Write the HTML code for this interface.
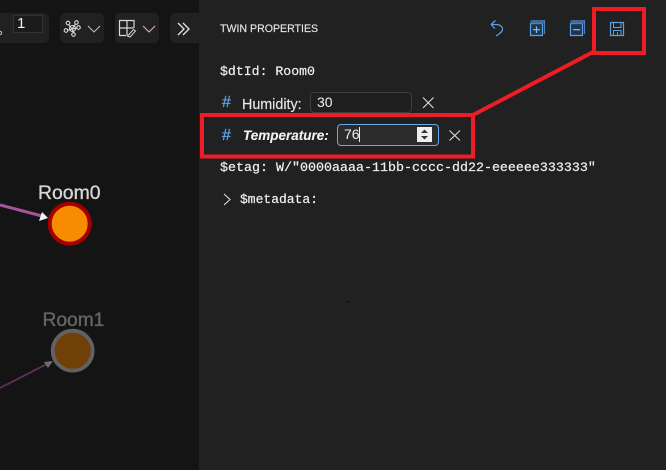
<!DOCTYPE html>
<html>
<head>
<meta charset="utf-8">
<style>
html,body{margin:0;padding:0;width:666px;height:470px;overflow:hidden;background:#141414;}
body{position:relative;font-family:"Liberation Sans",sans-serif;color:#eee;}
.a{position:absolute;white-space:pre;}
.m{font-family:"Liberation Mono",monospace;font-size:13.2px;color:#f0f0f0;line-height:16px;-webkit-text-stroke:.2px #f0f0f0;}
.s{font-size:14.3px;color:#e8e8e8;line-height:18px;-webkit-text-stroke:.15px #e8e8e8;}
.h{font-size:16px;line-height:18px;color:#5aa0e6;-webkit-text-stroke:.35px #5aa0e6;}
</style>
</head>
<body>
<!-- toolbar groups -->
<div class="a" style="left:-10px;top:13px;width:59px;height:30px;background:#212121;border-radius:5px"></div>
<div class="a" style="left:60px;top:13px;width:44px;height:30px;background:#212121;border-radius:5px"></div>
<div class="a" style="left:115px;top:13px;width:44px;height:30px;background:#212121;border-radius:5px"></div>
<div class="a" style="left:170px;top:13px;width:40px;height:30px;background:#212121;border-radius:5px"></div>
<div class="a" style="left:13px;top:15px;width:28px;height:16px;border:1px solid #333;background:#1b1b1b"></div>
<div class="a" style="left:17px;top:15px;font-size:15px;line-height:18px;color:#eee">1</div>
<svg class="a" style="left:0;top:0" width="200" height="50" fill="none">
<circle cx="0" cy="33" r="1.6" stroke="#ccc"/>
<g stroke="#d8d8d8" stroke-width="1.1">
<path d="M72 29L68.500 24.500M72 29L75.500 24M72 29L67.500 30.500M72 29L74 33M72 29L77 28"/>
<circle cx="72.500" cy="28.500" r="3"/><circle cx="68" cy="23" r="1.800"/><circle cx="76.500" cy="22.500" r="1.800"/><circle cx="66" cy="30.500" r="1.800"/><circle cx="73.500" cy="34.500" r="1.800"/><circle cx="78.500" cy="27.500" r="1.800"/>
</g>
<path d="M88 26L94 32L100 26" stroke="#a9bfd0" stroke-width="1.1"/>
<path d="M126 35.500H119.500V20.500H134V28M119.500 28H133.500M127 20.500V35.500" stroke="#d8d8d8" stroke-width="1.200"/>
<path d="M127.500 36L133.500 29.500L135.500 31L130 37Z" stroke="#d8d8d8" fill="#212121"/>
<path d="M143 26L149 32L155 26" stroke="#d0b9a9" stroke-width="1.1"/>
<path d="M178 23L184 29L178 35M183 23L189 29L183 35" stroke="#e6e6e6" stroke-width="1.3"/>
</svg>

<!-- Panel -->
<div class="a" style="left:199px;top:0;width:467px;height:470px;background:#212121"></div>

<!-- graph -->
<svg class="a" style="left:0;top:170px" width="120" height="240" fill="none">
<path d="M0 35L42 46" stroke="#a4559c" stroke-width="3"/>
<path d="M48 48L39 51L42 42Z" fill="#f2f2f2"/>
<circle cx="69.700" cy="53.700" r="20" fill="#f88c00" stroke="#a50000" stroke-width="4"/>
<path d="M0 218L46 194.500" stroke="#5f315d" stroke-width="1.800"/>
<path d="M53 191L44 192L48 198Z" fill="#6e6e6e"/>
<circle cx="72.700" cy="180.700" r="20" fill="#704009" stroke="#626262" stroke-width="3.800"/>
</svg>
<div class="a" style="left:38px;top:182px;font-size:19.400px;line-height:22px;color:#d6d6d6;-webkit-text-stroke:.35px #d6d6d6">Room0</div>
<div class="a" style="left:42.500px;top:310px;font-size:19.200px;line-height:22px;color:#666;-webkit-text-stroke:.35px #666">Room1</div>
<div class="a" style="left:347px;top:301px;width:2px;height:1px;background:#000"></div>

<!-- header -->
<div class="a" style="left:220px;top:21px;font-size:10.600px;line-height:16px;color:#e4e4e4;-webkit-text-stroke:.15px #e4e4e4">TWIN PROPERTIES</div>
<svg class="a" style="left:470px;top:0" width="196" height="70" fill="none">
<path d="M21 24.500L25.500 20.500M21 24.500L25 28.500M21.500 24.500H26C30 24.500 32.500 26.500 32.500 29.500C32.500 32 29.500 33.500 26 36" stroke="#5aa0e6" stroke-width="1.200"/>
<path d="M60.500 23.500H72.500V35.500H60.500Z" stroke="#5aa0e6" stroke-width="1.200" fill="#20354b"/>
<path d="M60.500 20.800H74.500V34" stroke="#4a7fb8" stroke-width="1.200"/>
<path d="M60.500 21H74V23.500H60.500Z" fill="#3f6a9a"/>
<path d="M66.500 26.500V33M63 29.700H70" stroke="#8cc0f2" stroke-width="1.200"/>
<path d="M100.500 23.500H112.500V35.500H100.500Z" stroke="#5aa0e6" stroke-width="1.200" fill="#20354b"/>
<path d="M100.500 20.800H114.500V34" stroke="#4a7fb8" stroke-width="1.200"/>
<path d="M100.500 21H114V23.500H100.500Z" fill="#3f6a9a"/>
<path d="M103 29.700H110" stroke="#8cc0f2" stroke-width="1.200"/>
<path d="M140.500 22.500H153.500V35.500H140.500Z" stroke="#5aa0e6" stroke-width="1.200"/>
<path d="M143.500 22.500V27.500H151V22.500M143.500 35.500V30.500H151V35.500M147.500 32V35" stroke="#5aa0e6" stroke-width="1"/>
</svg>

<!-- rows -->
<div class="a m" style="left:220px;top:64px">$dtId: Room0</div>

<div class="a h" style="left:222px;top:94px">#</div>
<div class="a s" style="left:242px;top:95.500px">Humidity:</div>
<div class="a" style="left:310px;top:92px;width:100px;height:19px;border:1px solid #3d3d3d;border-radius:4px;background:#1f1f1f"></div>
<div class="a" style="left:317px;top:93px;font-size:14px;line-height:18px;color:#eee">30</div>
<svg class="a" style="left:420px;top:95px" width="16" height="16" fill="none"><path d="M3 2.500L13.500 13M13.500 2.500L3 13" stroke="#dcdcdc" stroke-width="1.100"/></svg>

<div class="a h" style="left:222px;top:127px">#</div>
<div class="a s" style="left:243px;top:127px;font-weight:bold;font-style:italic;color:#f2f2f2;font-size:13.500px;-webkit-text-stroke:.1px #f2f2f2">Temperature:</div>
<div class="a" style="left:337px;top:124px;width:100px;height:20px;border:1px solid #6aa8e6;border-radius:4px;background:#2b2b2b"></div>
<div class="a" style="left:344px;top:125px;font-size:14px;line-height:18px;color:#eee">76</div>
<div class="a" style="left:359px;top:127px;width:1px;height:15px;background:#eee"></div>
<div class="a" style="left:417px;top:127px;width:15px;height:15px;background:#eee"></div>
<svg class="a" style="left:417px;top:127px" width="15" height="15"><path d="M4 6L7.500 2.500L11 6ZM4 9L7.500 12.500L11 9Z" fill="#333"/></svg>
<svg class="a" style="left:447px;top:127px" width="16" height="16" fill="none"><path d="M2.500 3.500L13 13.500M13 3.500L2.500 13.500" stroke="#dcdcdc" stroke-width="1.100"/></svg>

<div class="a m" style="left:220px;top:161px;font-size:13.330px">$etag: W/"0000aaaa-11bb-cccc-dd22-eeeeee333333"</div>
<svg class="a" style="left:222px;top:193px" width="10" height="14" fill="none"><path d="M2 1L8 6.500L2 12" stroke="#dcdcdc" stroke-width="1.100"/></svg>
<div class="a m" style="left:240px;top:192px;font-size:13px">$metadata:</div>

<!-- red annotations -->
<svg class="a" style="left:0;top:0" width="666" height="470" fill="none">
<rect x="202" y="115" width="271" height="41.500" stroke="#ee1c25" stroke-width="4"/>
<rect x="594" y="9" width="50" height="44" stroke="#ee1c25" stroke-width="4"/>
<path d="M471 116L595 51" stroke="#ee1c25" stroke-width="4"/>
</svg>
</body>
</html>
